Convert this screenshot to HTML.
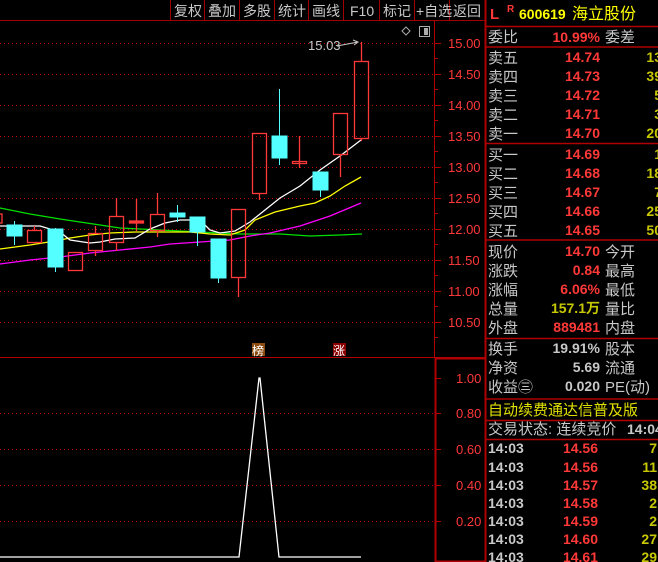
<!DOCTYPE html>
<html><head><meta charset="utf-8"><style>
html,body{margin:0;padding:0;background:#000;width:658px;height:562px;overflow:hidden}
svg{display:block}
text{font-family:"Liberation Sans","Noto Sans CJK SC",sans-serif}
.lb{fill:#c8c8c8;font-size:15px}
.pr{fill:#ff3838;font-size:14px;font-weight:bold;text-anchor:end}
.vo{fill:#c8c800;font-size:14px;font-weight:bold;text-anchor:end}
.ax{fill:#ff3838;font-size:13px}
.tb{fill:#c8c8c8;font-size:14px}
</style></head><body>
<svg width="658" height="562" viewBox="0 0 658 562" xmlns="http://www.w3.org/2000/svg">
<g stroke="#a00000" stroke-width="1">
<line x1="0" y1="20.5" x2="485" y2="20.5"/>
<line x1="170.5" y1="0" x2="170.5" y2="20"/><line x1="204.5" y1="0" x2="204.5" y2="20"/>
<line x1="239.5" y1="0" x2="239.5" y2="20"/><line x1="274.5" y1="0" x2="274.5" y2="20"/>
<line x1="308.5" y1="0" x2="308.5" y2="20"/><line x1="343.5" y1="0" x2="343.5" y2="20"/>
<line x1="379.5" y1="0" x2="379.5" y2="20"/><line x1="414.5" y1="0" x2="414.5" y2="20"/>
<line x1="449.5" y1="0" x2="449.5" y2="20"/>
</g>
<g class="tb">
<text x="174" y="16">复权</text><text x="208" y="16">叠加</text><text x="243" y="16">多股</text>
<text x="278" y="16">统计</text><text x="312" y="16">画线</text><text x="350" y="16">F10</text>
<text x="383" y="16">标记</text><text x="416" y="16">+自选</text><text x="453" y="16">返回</text>
</g>
<g stroke="#c00000" stroke-dasharray="1,3" stroke-width="1">
<line x1="0" y1="43.5" x2="434" y2="43.5"/><line x1="0" y1="74.5" x2="434" y2="74.5"/>
<line x1="0" y1="105.5" x2="434" y2="105.5"/><line x1="0" y1="136.5" x2="434" y2="136.5"/>
<line x1="0" y1="167.5" x2="434" y2="167.5"/><line x1="0" y1="198.5" x2="434" y2="198.5"/>
<line x1="0" y1="229.5" x2="434" y2="229.5"/><line x1="0" y1="260.5" x2="434" y2="260.5"/>
<line x1="0" y1="291.5" x2="434" y2="291.5"/><line x1="0" y1="322.5" x2="434" y2="322.5"/>
<line x1="0" y1="413.5" x2="434" y2="413.5"/><line x1="0" y1="449.5" x2="434" y2="449.5"/>
<line x1="0" y1="485.5" x2="434" y2="485.5"/><line x1="0" y1="521.5" x2="434" y2="521.5"/>
</g>
<g stroke="#b00000" stroke-width="1" fill="none">
<line x1="434.5" y1="20" x2="434.5" y2="357"/>
<line x1="0" y1="357.5" x2="485" y2="357.5"/>
<rect x="435.5" y="358.5" width="50" height="203" stroke-width="2"/>
<line x1="485.5" y1="0" x2="485.5" y2="562" stroke-width="2"/>
</g>
<g stroke="#b00000">
<line x1="434" y1="43.5" x2="441" y2="43.5"/><line x1="434" y1="74.5" x2="441" y2="74.5"/>
<line x1="434" y1="105.5" x2="441" y2="105.5"/><line x1="434" y1="136.5" x2="441" y2="136.5"/>
<line x1="434" y1="167.5" x2="441" y2="167.5"/><line x1="434" y1="198.5" x2="441" y2="198.5"/>
<line x1="434" y1="229.5" x2="441" y2="229.5"/><line x1="434" y1="260.5" x2="441" y2="260.5"/>
<line x1="434" y1="291.5" x2="441" y2="291.5"/><line x1="434" y1="322.5" x2="441" y2="322.5"/>
<line x1="434" y1="58.5" x2="438" y2="58.5"/><line x1="434" y1="89.5" x2="438" y2="89.5"/>
<line x1="434" y1="120.5" x2="438" y2="120.5"/><line x1="434" y1="151.5" x2="438" y2="151.5"/>
<line x1="434" y1="182.5" x2="438" y2="182.5"/><line x1="434" y1="213.5" x2="438" y2="213.5"/>
<line x1="434" y1="244.5" x2="438" y2="244.5"/><line x1="434" y1="275.5" x2="438" y2="275.5"/>
<line x1="434" y1="306.5" x2="438" y2="306.5"/><line x1="434" y1="337.5" x2="438" y2="337.5"/>
<line x1="436" y1="378.5" x2="441" y2="378.5"/><line x1="436" y1="413.5" x2="441" y2="413.5"/>
<line x1="436" y1="449.5" x2="441" y2="449.5"/><line x1="436" y1="485.5" x2="441" y2="485.5"/>
<line x1="436" y1="521.5" x2="441" y2="521.5"/>
</g>
<g class="ax">
<text x="448" y="48">15.00</text><text x="448" y="79">14.50</text><text x="448" y="110">14.00</text>
<text x="448" y="141">13.50</text><text x="448" y="172">13.00</text><text x="448" y="203">12.50</text>
<text x="448" y="234">12.00</text><text x="448" y="265">11.50</text><text x="448" y="296">11.00</text>
<text x="448" y="327">10.50</text>
<text x="456" y="383">1.00</text><text x="456" y="418">0.80</text><text x="456" y="454">0.60</text>
<text x="456" y="490">0.40</text><text x="456" y="526">0.20</text>
</g>
<path d="M406 27 L410 31 L406 35 L402 31 Z" fill="none" stroke="#aaa"/>
<rect x="419.5" y="26.5" width="10" height="10" fill="none" stroke="#aaa"/><rect x="424" y="28" width="4" height="7" fill="#aaa"/>
<text x="308" y="50" fill="#c8c8c8" font-size="13">15.03</text>
<path d="M337 46 L358 42 M353 40 L358 42 L354 45" stroke="#c8c8c8" fill="none"/>
<polyline fill="none" stroke="#00e000" stroke-width="1.3" points="0,208 30,214 60,219 80,222 100,225 120,228 140,229 160,230 180,231 200,232 240,234 280,234 310,236 340,235 362,234"/>
<polyline fill="none" stroke="#ff00ff" stroke-width="1.3" points="0,264 30,260 60,257 90,253 120,250 150,247 170,244 200,242 230,240 250,236 270,233 300,226 330,216 361,203"/>
<polyline fill="none" stroke="#ffff00" stroke-width="1.3" points="0,249 30,245 55,241 70,238 90,235 110,233 135,232 160,232 190,232 210,234 230,235 245,230 255,220 275,212 300,206 315,203 330,196 345,186 361,177"/>
<polyline fill="none" stroke="#ffffff" stroke-width="1.3" points="0,226 40,226 60,232 70,240 90,243 100,242 115,239 135,238 150,229 165,223 180,220 200,220 210,230 220,233 235,231 250,222 265,210 280,198 300,186 320,170 340,156 361,140"/>
<g stroke="#ff3838" fill="none" stroke-width="1.3">
<rect x="-5" y="214" width="7" height="9"/>
<line x1="34.5" y1="226" x2="34.5" y2="230"/><rect x="27.5" y="230.5" width="14" height="12"/>
<rect x="68.5" y="252.5" width="14" height="18"/>
<line x1="95.5" y1="226" x2="95.5" y2="233"/><line x1="95.5" y1="251" x2="95.5" y2="256"/><rect x="88.5" y="233.5" width="14" height="17"/>
<line x1="116.5" y1="198" x2="116.5" y2="216"/><line x1="116.5" y1="243" x2="116.5" y2="251"/><rect x="109.5" y="216.5" width="14" height="26"/>
<line x1="136.5" y1="199" x2="136.5" y2="231"/><rect x="129.5" y="221" width="14" height="2" fill="#ff3838"/>
<line x1="157.5" y1="193" x2="157.5" y2="214"/><line x1="157.5" y1="231" x2="157.5" y2="237"/><rect x="150.5" y="214.5" width="14" height="16"/>
<line x1="238.5" y1="278" x2="238.5" y2="297"/><rect x="231.5" y="209.5" width="14" height="68"/>
<line x1="259.5" y1="194" x2="259.5" y2="200"/><rect x="252.5" y="133.5" width="14" height="60"/>
<line x1="299.5" y1="136" x2="299.5" y2="168"/><rect x="292.5" y="161.5" width="14" height="2"/>
<line x1="340.5" y1="155" x2="340.5" y2="177"/><rect x="333.5" y="113.5" width="14" height="41"/>
<line x1="361.5" y1="42" x2="361.5" y2="61"/><line x1="361.5" y1="139" x2="361.5" y2="141"/><rect x="354.5" y="61.5" width="14" height="77"/>
</g>
<g fill="#54ffff" stroke="#54ffff">
<line x1="14.5" y1="221" x2="14.5" y2="245"/><rect x="7" y="225" width="15" height="11"/>
<line x1="55.5" y1="228" x2="55.5" y2="272"/><rect x="48" y="229" width="15" height="38"/>
<line x1="177.5" y1="205" x2="177.5" y2="222"/><rect x="170" y="213" width="15" height="4"/>
<line x1="197.5" y1="232" x2="197.5" y2="246"/><rect x="190" y="217" width="15" height="15"/>
<line x1="218.5" y1="278" x2="218.5" y2="283"/><rect x="211" y="239" width="15" height="39"/>
<line x1="279.5" y1="89" x2="279.5" y2="165"/><rect x="272" y="136" width="15" height="22"/>
<line x1="320.5" y1="190" x2="320.5" y2="197"/><rect x="313" y="172" width="15" height="18"/>
</g>
<rect x="252" y="343" width="13" height="13" fill="#8b4a10"/><text x="252" y="355" fill="#fff" font-size="12">榜</text>
<rect x="333" y="343" width="13" height="13" fill="#8a0000"/><text x="333" y="355" fill="#fff" font-size="12">涨</text>
<polyline fill="none" stroke="#fff" stroke-width="1.3" points="0,557 239,557 259,378 260,378 279,557 361,557"/>
<g stroke="#b00000" stroke-width="1.5">
<line x1="485" y1="26.5" x2="658" y2="26.5"/><line x1="485" y1="47" x2="658" y2="47"/>
<line x1="485" y1="143.5" x2="658" y2="143.5"/><line x1="485" y1="240" x2="658" y2="240"/>
<line x1="485" y1="338.5" x2="658" y2="338.5"/><line x1="485" y1="399" x2="658" y2="399"/>
<line x1="485" y1="420.5" x2="658" y2="420.5"/><line x1="485" y1="439.5" x2="658" y2="439.5"/>
</g>
<text x="490" y="19" fill="#ff3838" font-size="15" font-weight="bold">L</text>
<text x="507" y="12" fill="#ff3838" font-size="10" font-weight="bold">R</text>
<text x="519" y="19" fill="#ffff00" font-size="14" font-weight="bold">600619</text>
<text x="572" y="19" fill="#ffff00" font-size="16">海立股份</text>
<g class="lb">
<text x="488" y="42">委比</text><text x="605" y="42">委差</text>
<text x="488" y="63">卖五</text><text x="488" y="82">卖四</text><text x="488" y="101">卖三</text><text x="488" y="120">卖二</text><text x="488" y="139">卖一</text>
<text x="488" y="160">买一</text><text x="488" y="179">买二</text><text x="488" y="198">买三</text><text x="488" y="217">买四</text><text x="488" y="236">买五</text>
<text x="488" y="257">现价</text><text x="488" y="276">涨跌</text><text x="488" y="295">涨幅</text><text x="488" y="314">总量</text><text x="488" y="333">外盘</text>
<text x="605" y="257">今开</text><text x="605" y="276">最高</text><text x="605" y="295">最低</text><text x="605" y="314">量比</text><text x="605" y="333">内盘</text>
<text x="488" y="354">换手</text><text x="488" y="373">净资</text><text x="488" y="392">收益㊂</text>
<text x="605" y="354">股本</text><text x="605" y="373">流通</text><text x="605" y="392">PE(动)</text>
<text x="488" y="434">交易状态: 连续竞价</text>
</g>
<text x="488" y="415" fill="#e0e000" font-size="15">自动续费通达信普及版 </text>
<text x="627" y="434" fill="#c8c8c8" font-size="14" font-weight="bold">14:04</text>
<g class="pr">
<text x="600" y="42">10.99%</text>
<text x="600" y="62">14.74</text><text x="600" y="81">14.73</text><text x="600" y="100">14.72</text><text x="600" y="119">14.71</text><text x="600" y="138">14.70</text>
<text x="600" y="159">14.69</text><text x="600" y="178">14.68</text><text x="600" y="197">14.67</text><text x="600" y="216">14.66</text><text x="600" y="235">14.65</text>
<text x="600" y="256">14.70</text><text x="600" y="275">0.84</text><text x="600" y="294">6.06%</text><text x="600" y="332">889481</text>
<text x="598" y="453">14.56</text><text x="598" y="472">14.56</text><text x="598" y="490">14.57</text><text x="598" y="508">14.58</text><text x="598" y="526">14.59</text><text x="598" y="544">14.60</text><text x="598" y="562">14.61</text>
</g>
<text x="600" y="313" class="vo">157.1万</text>
<g class="vo">
<text x="662" y="62">13</text><text x="662" y="81">39</text><text x="662" y="100">5</text><text x="662" y="119">3</text><text x="662" y="138">20</text>
<text x="662" y="159">1</text><text x="662" y="178">18</text><text x="662" y="197">7</text><text x="662" y="216">25</text><text x="662" y="235">50</text>
<text x="657" y="453">7</text><text x="657" y="472">11</text><text x="657" y="490">38</text><text x="657" y="508">2</text><text x="657" y="526">2</text><text x="657" y="544">27</text><text x="657" y="562">29</text>
</g>
<g fill="#c8c8c8" font-size="14" font-weight="bold" text-anchor="end">
<text x="600" y="353">19.91%</text><text x="600" y="372">5.69</text><text x="600" y="391">0.020</text>
</g>
<g fill="#c8c8c8" font-size="14" font-weight="bold">
<text x="488" y="453">14:03</text><text x="488" y="472">14:03</text><text x="488" y="490">14:03</text><text x="488" y="508">14:03</text><text x="488" y="526">14:03</text><text x="488" y="544">14:03</text><text x="488" y="562">14:03</text>
</g>
</svg>
</body></html>
